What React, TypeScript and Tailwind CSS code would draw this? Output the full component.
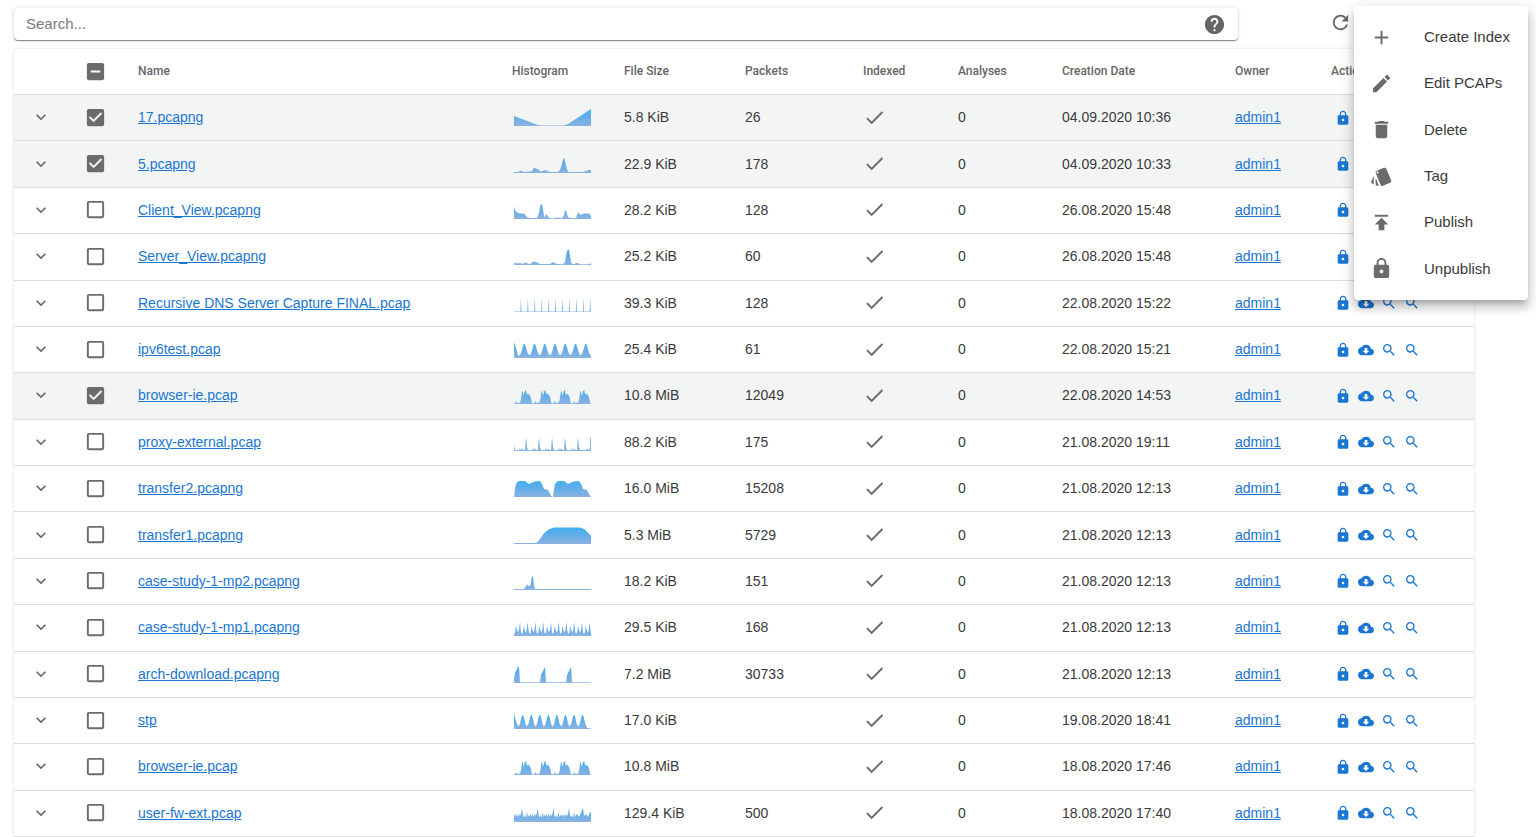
import { useEffect, useRef, useState } from "react";
import {
  MdAdd,
  MdCheck,
  MdCheckBox,
  MdCheckBoxOutlineBlank,
  MdCloudDownload,
  MdDelete,
  MdEdit,
  MdExpandMore,
  MdHelp,
  MdIndeterminateCheckBox,
  MdLock,
  MdPublish,
  MdRefresh,
  MdSearch,
  MdStyle,
} from "react-icons/md";

type Point = [number, number];

// repeats a group of points n times, moved right by step each time
const repeat = (points: Point[], n: number, step: number, start = 0) =>
  Array.from({ length: n }, (_, i) =>
    points.map(([x, h]): Point => [start + x + i * step, h])
  ).flat();

const browserShape: Point[] = repeat(
  [[0, 0.5], [1, 1], [2, 3], [3, 1], [6, 1.5], [7, 5], [8, 12], [8.7, 13.5], [9.5, 8], [11, 13], [12, 14], [13, 9], [14, 10.5], [16, 8.5], [17, 6], [18, 1]],
  4,
  19.4
);

// points are [x, height] on a 77px wide strip
const shapes: Record<string, Point[]> = {
  valley: [[0, 10], [20, 2.5], [24, 1], [28, 0.5], [50, 0.5], [54, 2], [77, 17]],
  lateSpike: [[0, 1], [4, 1], [7, 2.5], [10, 1], [16, 1.5], [18, 2], [20, 5.5], [22, 4.5], [25, 3], [27, 1.5], [31, 3], [36, 1], [44, 1], [46, 3], [48, 9], [49.5, 15], [50.5, 14], [52, 7], [54, 1.5], [55, 1], [69, 1], [72, 2], [75, 3.3], [77, 3.3]],
  client: [[0, 13], [1, 9], [3, 6.5], [6, 5.5], [10, 5.5], [13, 2], [16, 1], [23, 1], [25, 6], [26.5, 14], [28, 15], [29, 9], [30.5, 1.5], [32, 5], [33, 4], [35, 1], [40, 0.7], [43, 1.5], [48, 0.7], [50, 4], [51, 9], [52, 8], [54, 2], [56, 1], [62, 1], [64, 7], [66, 4], [70, 5.5], [75, 5.5], [77, 3]],
  server: [[0, 1], [1, 2.5], [3, 1.5], [6, 2], [9, 1.2], [12, 2.5], [15, 1], [17, 1.5], [19, 3.5], [22, 3], [26, 1], [36, 1], [39, 3], [43, 1], [49, 0.7], [51, 3], [52.5, 12], [54, 16], [55, 15], [57, 3], [58, 1], [60, 1], [63, 2.3], [66, 0.7], [75, 0.7], [77, 2]],
  comb: [[0, 0.6], ...repeat([[-0.7, 0.6], [0, 14], [0.5, 0.6]], 11, 6.93, 7)],
  waves7: [[0, 16], [2, 10], [4, 3], [5.3, 2.5], ...repeat([[-3.3, 5], [-1, 13], [0, 14.5], [1, 13], [3.3, 5], [5.1, 2.5]], 7, 10.25, 10.3)],
  browser: browserShape,
  proxy: [[0, 6], [1, 1], ...repeat([[5, 0.8], [6, 3], [7, 0.8], [8.5, 2.5], [9.5, 1], [11, 1], [12, 14], [13, 4], [14, 1]], 5, 13), [72, 1], [74, 2.5], [75, 1], [76, 3], [76.5, 14], [77, 14]],
  plateau2: repeat([[0, 0], [1, 8], [2, 13], [4, 15.5], [6, 16], [11, 16], [13, 14.5], [15, 13], [18, 14.5], [21, 15.5], [26, 16], [28, 13], [30, 8], [34, 7], [36, 3], [38, 0.3]], 2, 39),
  plateau: [[0, 1], [20, 1], [23, 1.5], [26, 5], [29, 9.5], [32, 12.5], [35, 14.8], [40, 16.5], [66, 16.5], [70, 15], [74, 11.5], [77, 8]],
  earlySpike: [[0, 1], [10, 1], [12, 4], [13.5, 5.5], [15, 3.5], [16.5, 5], [18, 14], [19, 13], [20, 5], [21, 1], [77, 1]],
  teeth: repeat([[0, 2.5], [1, 3], [2, 10], [3, 6], [4, 3.5], [5, 6], [6, 14], [6.7, 6], [7.5, 2.5]], 10, 7.75),
  ramps: [[0, 5], [1, 10], [2.5, 13], [4, 16], [5, 16], [6, 0.7], [26, 0.7], [27, 8], [29, 12], [31, 16], [32, 0.7], [52, 0.7], [53, 8], [55, 12], [57, 16], [58, 0.7], [77, 0.7]],
  waves8: [[0, 16], [2, 8], [4, 2.5], ...repeat([[-2.8, 5], [-1, 12.5], [0, 14.5], [1, 12.5], [2.8, 5], [4.2, 2.5]], 8, 8.55, 8.7), [73, 1], [77, 0.5]],
  noise: [...repeat([[0, 6], [1, 8], [2, 5], [3, 8], [4, 5], [5, 8], [6, 6], [7, 8], [8, 14], [9, 6], [10, 5], [11, 7], [12, 4], [13, 10], [14, 5], [15, 7]], 4, 15.7), [63, 8], [65, 5], [67, 9], [69, 14], [70, 6], [72, 8], [74, 5], [76, 10], [77, 9]],
};

const captures = [
  { name: "17.pcapng", shape: "valley", size: "5.8 KiB", packets: "26", date: "04.09.2020 10:36", selected: true },
  { name: "5.pcapng", shape: "lateSpike", size: "22.9 KiB", packets: "178", date: "04.09.2020 10:33", selected: true },
  { name: "Client_View.pcapng", shape: "client", size: "28.2 KiB", packets: "128", date: "26.08.2020 15:48" },
  { name: "Server_View.pcapng", shape: "server", size: "25.2 KiB", packets: "60", date: "26.08.2020 15:48" },
  { name: "Recursive DNS Server Capture FINAL.pcap", shape: "comb", size: "39.3 KiB", packets: "128", date: "22.08.2020 15:22" },
  { name: "ipv6test.pcap", shape: "waves7", size: "25.4 KiB", packets: "61", date: "22.08.2020 15:21" },
  { name: "browser-ie.pcap", shape: "browser", size: "10.8 MiB", packets: "12049", date: "22.08.2020 14:53", selected: true },
  { name: "proxy-external.pcap", shape: "proxy", size: "88.2 KiB", packets: "175", date: "21.08.2020 19:11" },
  { name: "transfer2.pcapng", shape: "plateau2", size: "16.0 MiB", packets: "15208", date: "21.08.2020 12:13" },
  { name: "transfer1.pcapng", shape: "plateau", size: "5.3 MiB", packets: "5729", date: "21.08.2020 12:13" },
  { name: "case-study-1-mp2.pcapng", shape: "earlySpike", size: "18.2 KiB", packets: "151", date: "21.08.2020 12:13" },
  { name: "case-study-1-mp1.pcapng", shape: "teeth", size: "29.5 KiB", packets: "168", date: "21.08.2020 12:13" },
  { name: "arch-download.pcapng", shape: "ramps", size: "7.2 MiB", packets: "30733", date: "21.08.2020 12:13" },
  { name: "stp", shape: "waves8", size: "17.0 KiB", packets: "", date: "19.08.2020 18:41" },
  { name: "browser-ie.pcap", shape: "browser", size: "10.8 MiB", packets: "", date: "18.08.2020 17:46" },
  { name: "user-fw-ext.pcap", shape: "noise", size: "129.4 KiB", packets: "500", date: "18.08.2020 17:40" },
];

const menuItems = [
  { icon: MdAdd, label: "Create Index" },
  { icon: MdEdit, label: "Edit PCAPs" },
  { icon: MdDelete, label: "Delete" },
  { icon: MdStyle, label: "Tag" },
  { icon: MdPublish, label: "Publish" },
  { icon: MdLock, label: "Unpublish" },
];

const rowActions = [
  { icon: MdLock, label: "Visibility" },
  { icon: MdCloudDownload, label: "Download" },
  { icon: MdSearch, label: "Inspect" },
  { icon: MdSearch, label: "Analyze" },
];

function Histogram({ shape }: { shape: string }) {
  const line = shapes[shape].map(([x, h]) => `L${x} ${18 - h}`).join(" ");
  return (
    <svg viewBox="-2 0 80 18" className="block h-[18px] w-20">
      <defs>
        <linearGradient id={`fill-${shape}`} gradientUnits="userSpaceOnUse" x1="0" y1="1" x2="0" y2="18">
          <stop offset="0" stopColor="#3fb0f2" />
          <stop offset="0.4" stopColor="#5cace9" />
          <stop offset="1" stopColor="#8ab3e0" />
        </linearGradient>
      </defs>
      <path d={`M0 18 ${line} L77 18 Z`} fill={`url(#fill-${shape})`} />
    </svg>
  );
}

type TickBoxProps = {
  label: string;
  checked: boolean;
  mixed?: boolean;
  onChange: () => void;
};

function TickBox({ label, checked, mixed = false, onChange }: TickBoxProps) {
  const ref = useRef<HTMLInputElement>(null);
  useEffect(() => {
    if (ref.current) ref.current.indeterminate = mixed;
  }, [mixed]);
  const Icon = mixed ? MdIndeterminateCheckBox : checked ? MdCheckBox : MdCheckBoxOutlineBlank;

  return (
    <label className="mx-auto grid size-6 place-items-center text-[#6b6b6b]">
      <input
        ref={ref}
        type="checkbox"
        aria-label={label}
        checked={checked}
        onChange={onChange}
        className="col-start-1 row-start-1 size-5 appearance-none"
      />
      <Icon className="pointer-events-none col-start-1 row-start-1 size-[23px]" />
    </label>
  );
}

export default function App() {
  const [selected, setSelected] = useState(captures.map((c) => Boolean(c.selected)));
  const all = selected.every(Boolean);
  const some = selected.some(Boolean);

  const toggle = (index: number) =>
    setSelected(selected.map((value, i) => (i === index ? !value : value)));

  return (
    <main className="relative h-screen overflow-hidden bg-white pl-[14px] pr-[62px] pt-2 font-['Liberation_Sans',Arial,sans-serif] text-[#3a3a3a]">
      <div className="mb-[9px] flex h-8 items-center">
        <div className="mr-[91px] flex h-8 flex-1 items-center rounded-sm bg-white pl-3 pr-3 shadow-[0_1px_1px_rgba(0,0,0,0.45),0_0_4px_rgba(0,0,0,0.14)]">
          <input
            type="text"
            aria-label="Search"
            placeholder="Search..."
            className="min-w-0 flex-1 bg-transparent text-[15px] outline-none placeholder:text-[#7a7a7a]"
          />
          <button aria-label="Help" className="text-[#666666]">
            <MdHelp className="size-[23px]" />
          </button>
        </div>
        <button aria-label="Refresh" className="mr-[122px] pb-1 text-[#6b6b6b]">
          <MdRefresh className="size-[23px]" />
        </button>
      </div>

      <table className="h-[calc(100vh-49px)] w-full table-fixed border-separate border-spacing-0 rounded-sm text-left text-sm shadow-[0_0_3px_rgba(0,0,0,0.16)]">
        <colgroup>
          <col className="w-[54px]" />
          <col className="w-[54px]" />
          <col />
          <col className="w-[112px]" />
          <col className="w-[121px]" />
          <col className="w-[118px]" />
          <col className="w-[95px]" />
          <col className="w-[104px]" />
          <col className="w-[173px]" />
          <col className="w-[96px]" />
          <col className="w-[159px]" />
        </colgroup>
        <thead>
          <tr className="h-[46px] font-[Roboto,sans-serif] text-xs text-[#666666] *:border-b *:border-[#dedede] *:pb-px *:font-medium">
            <th aria-label="Expand" />
            <th>
              <TickBox
                label="Select all"
                checked={all}
                mixed={some && !all}
                onChange={() => setSelected(selected.map(() => !all))}
              />
            </th>
            <th className="pl-4">Name</th>
            <th className="pl-4">Histogram</th>
            <th className="pl-4">File Size</th>
            <th className="pl-4">Packets</th>
            <th className="pl-4">Indexed</th>
            <th className="pl-4">Analyses</th>
            <th className="pl-4">Creation Date</th>
            <th className="pl-4">Owner</th>
            <th className="pl-4">Actions</th>
          </tr>
        </thead>
        <tbody>
          {captures.map((capture, index) => (
            <tr
              key={index}
              className={`h-[46px] *:border-b *:border-[#dedede] *:pb-px ${selected[index] ? "bg-[#f3f5f5]" : "bg-white"}`}
            >
              <td>
                <button aria-label="Expand row" className="mx-auto block text-[#666666]">
                  <MdExpandMore className="size-5" />
                </button>
              </td>
              <td>
                <TickBox
                  label={`Select ${capture.name}`}
                  checked={selected[index]}
                  onChange={() => toggle(index)}
                />
              </td>
              <td className="truncate pl-4">
                <a href="#" className="text-[#1976d2] underline">
                  {capture.name}
                </a>
              </td>
              <td className="pl-4">
                <Histogram shape={capture.shape} />
              </td>
              <td className="pl-4">{capture.size}</td>
              <td className="pl-4">{capture.packets}</td>
              <td className="pl-4">
                <MdCheck className="size-[23px] text-[#6b6b6b]" />
              </td>
              <td className="pl-4">0</td>
              <td className="pl-4">{capture.date}</td>
              <td className="pl-4">
                <a href="#" className="text-[#1976d2] underline">
                  admin1
                </a>
              </td>
              <td className="pl-4">
                <div className="flex pt-px text-[#1976d2]">
                  {rowActions.map(({ icon: Icon, label }) => (
                    <button key={label} aria-label={label} className="flex w-[23px] justify-center">
                      <Icon className="size-4" />
                    </button>
                  ))}
                </div>
              </td>
            </tr>
          ))}
        </tbody>
      </table>

      <div
        role="menu"
        className="absolute right-2 top-[6px] grid h-[294px] w-[174px] rounded bg-white py-2 text-[15px] shadow-[0_5px_5px_-3px_rgba(0,0,0,0.2),0_8px_10px_1px_rgba(0,0,0,0.14),0_3px_14px_2px_rgba(0,0,0,0.12)]"
      >
        {menuItems.map(({ icon: Icon, label }) => (
          <button key={label} role="menuitem" className="flex items-center gap-[31px] whitespace-nowrap pl-4 text-left">
            <Icon className="size-[23px] shrink-0 text-[#6b6b6b]" />
            {label}
          </button>
        ))}
      </div>
    </main>
  );
}
